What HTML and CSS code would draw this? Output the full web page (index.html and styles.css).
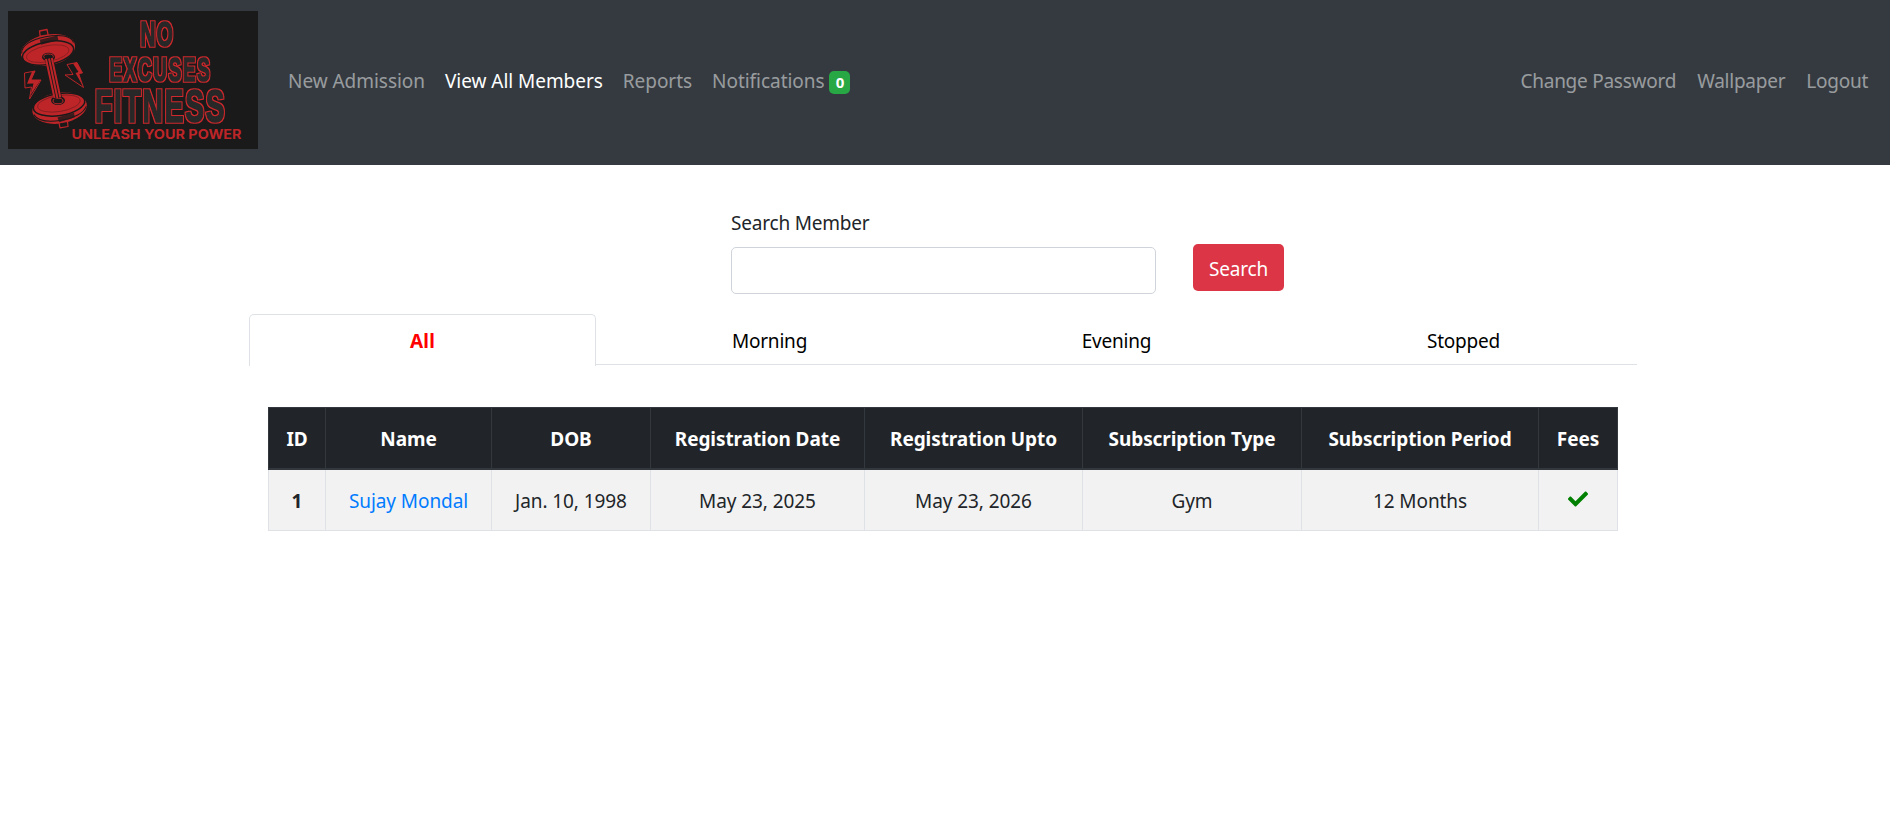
FILE: index.html
```html
<!DOCTYPE html>
<html lang="en">
<head>
<meta charset="utf-8">
<title>View All Members</title>
<link rel="stylesheet" href="styles.css">
</head>
<body>
<nav class="navbar">
  <svg class="logo" width="250" height="138" viewBox="8 11 250 138" role="img">
    <defs>
      <filter id="outline" x="-5%" y="-5%" width="110%" height="110%" color-interpolation-filters="sRGB">
        <feMorphology in="SourceAlpha" operator="dilate" radius="1" result="grown"/>
        <feFlood flood-color="#d0282c"/>
        <feComposite in2="grown" operator="in" result="edge"/>
        <feMerge><feMergeNode in="edge"/><feMergeNode in="SourceGraphic"/></feMerge>
      </filter>
    </defs>
    <rect x="8" y="11" width="250" height="138" fill="#1a1a1a"/>
    <!-- dumbbell -->
    <g stroke-linejoin="round">
      <path d="M39.500 31l7.500-1.500 1.200 6-8 1z" fill="#1a1a1a" stroke="#bd2528" stroke-width="1.300"/>
      <g transform="rotate(-11 48 50)">
        <ellipse cx="48" cy="50" rx="27.500" ry="15.500" fill="#bd2528"/>
        <path d="M21.500 48.500c1-8 12-12 26.500-12s25.500 4 26.500 11" fill="none" stroke="#1a1a1a" stroke-width="1"/>
        <path d="M42 38.500l18-1v5l-18 1z" fill="#1a1a1a" opacity=".8"/>
        <ellipse cx="47.500" cy="53" rx="26" ry="11.300" fill="none" stroke="#1a1a1a" stroke-width="1.500"/>
        <ellipse cx="47" cy="53.500" rx="21.500" ry="8" fill="none" stroke="#7a1d1f" stroke-width=".7"/>
      </g>
      <ellipse cx="48.500" cy="57" rx="6.500" ry="4.300" fill="#1a1a1a"/>
      <ellipse cx="48.500" cy="56.500" rx="4.800" ry="2.500" fill="none" stroke="#bd2528"/>
      <g transform="rotate(-9 59.500 107.500)">
        <ellipse cx="59.500" cy="108" rx="27.500" ry="15.500" fill="#bd2528"/>
        <ellipse cx="59.500" cy="104.500" rx="26" ry="11" fill="none" stroke="#1a1a1a" stroke-width="1.500"/>
        <ellipse cx="59.500" cy="103.500" rx="21.500" ry="8" fill="none" stroke="#7a1d1f" stroke-width=".8"/>
        <path d="M33 110.500c3 7 14 10 26.500 10s23.500-4 26.500-10" fill="none" stroke="#1a1a1a" stroke-width="1"/>
        <path d="M56 117l17-2v4.500l-16 2.500z" fill="#1a1a1a" opacity=".8"/>
      </g>
      <ellipse cx="58" cy="100.500" rx="7" ry="4.500" fill="#1a1a1a"/>
      <ellipse cx="58" cy="101" rx="5" ry="2.800" fill="none" stroke="#bd2528"/>
      <path d="M44.500 58l8-1.500 9.500 41-8 1.500z" fill="#1a1a1a"/>
      <path d="M46 59l8.500 39M49 58.500l8.500 40M51.800 58l8.500 39.500" stroke="#bd2528" stroke-width="2" fill="none"/>
      <path d="M59 122.800l8.500-1.300.5 5-8 1.300z" fill="#1a1a1a" stroke="#bd2528" stroke-width="1.200"/>
      <g fill="#1a1a1a" stroke="#bd2528" stroke-width="1">
        <path d="M24.500 73l10.500-2-4 9 10 0-11.500 19 2-12-6.500 1z"/>
        <path d="M67 64.500l10-2 5.500 10.500-4 .5 5 14-18.500-12.500 8-.5z"/>
      </g>
      <path d="M32 71.500l3-.8-4 9.200 9.500.2-10 15 3-11.500-6.500.2zM73 63.500l4-1 5.500 10.500-3.500.5 3.500 12-7-12.500 3-1z" fill="#bd2528"/>
    </g>
    <g class="logo-title" filter="url(#outline)">
      <text transform="translate(140.500 46) scale(.6 1)" font-size="34.500" textLength="54" lengthAdjust="spacing">NO</text>
      <text transform="translate(109.500 81) scale(.56 1)" font-size="33.500" textLength="179" lengthAdjust="spacing">EXCUSES</text>
      <text transform="translate(95 121.500) scale(.6 1)" font-size="47" textLength="216" lengthAdjust="spacing">FITNESS</text>
    </g>
    <text class="logo-tag" x="71.500" y="138.500" textLength="170" lengthAdjust="spacingAndGlyphs">UNLEASH YOUR POWER</text>
  </svg>
  <div class="nav-list">
    <a>New Admission</a>
    <a class="active">View All Members</a>
    <a>Reports</a>
    <a>Notifications <span class="badge">0</span></a>
  </div>
  <div class="nav-list nav-right">
    <a>Change Password</a>
    <a>Wallpaper</a>
    <a>Logout</a>
  </div>
</nav>
<main class="container">
  <form class="search">
    <div class="field">
      <label for="q">Search Member</label>
      <input id="q" type="text">
    </div>
    <button type="button" class="btn">Search</button>
  </form>
  <div class="tabs">
    <a class="tab selected">All</a>
    <a class="tab">Morning</a>
    <a class="tab">Evening</a>
    <a class="tab">Stopped</a>
  </div>
  <table class="members">
    <colgroup><col class="c-id"><col class="c-name"><col class="c-dob"><col class="c-reg"><col class="c-upto"><col class="c-type"><col class="c-period"><col class="c-fees"></colgroup>
    <thead>
      <tr><th>ID</th><th>Name</th><th>DOB</th><th>Registration Date</th><th>Registration Upto</th><th>Subscription Type</th><th>Subscription Period</th><th>Fees</th></tr>
    </thead>
    <tbody>
      <tr><th>1</th><td><a class="link">Sujay Mondal</a></td><td>Jan. 10, 1998</td><td>May 23, 2025</td><td>May 23, 2026</td><td>Gym</td><td>12 Months</td>
      <td><svg class="check" width="20" height="20" viewBox="0 0 512 512"><path fill="green" d="M173.900 439.400l-166.400-166.400c-10-10-10-26.200 0-36.200l36.200-36.200c10-10 26.200-10 36.200 0L192 312.700 432.100 72.600c10-10 26.200-10 36.200 0l36.200 36.200c10 10 10 26.200 0 36.200l-294.400 294.400c-10 10-26.200 10-36.200 0z"/></svg></td></tr>
    </tbody>
  </table>
</main>
</body>
</html>
```

FILE: styles.css
```css
* { box-sizing: border-box; }
body {
  margin: 0;
  background: #fff;
  color: #212529;
  font: 19px/30px "Noto Sans", "Open Sans", sans-serif;
  letter-spacing: -.2px;
}
.navbar {
  display: flex;
  align-items: center;
  height: 165px;
  padding: 0 22px 5px 8px;
  background: #343a40;
}
.logo { display: block; flex: none; }
.logo-title {
  font-family: "Liberation Sans", sans-serif;
  font-weight: 700;
  fill: #282828;
  stroke: #282828;
  stroke-width: 1.6px;
  letter-spacing: 0;
}
.logo-tag {
  font: 700 13px "Inter", sans-serif;
  fill: #bd2528;
  letter-spacing: 0;
}
.nav-list {
  display: flex;
  gap: 20px;
  margin: 1px 0 0 30px;
  color: rgba(255,255,255,.5);
  letter-spacing: -.04px;
  white-space: nowrap;
}
.nav-right { margin-left: auto; gap: 21px; letter-spacing: -.25px; }
.active { color: #fff; }
.badge {
  display: inline-block;
  min-width: 21px;
  padding: 4px 6px;
  border-radius: 5px;
  background: #28a745;
  color: #fff;
  font-size: 15px;
  font-weight: 700;
  line-height: 15px;
  text-align: center;
  letter-spacing: 0;
  vertical-align: baseline;
}
.container { width: 1388px; margin: 0 auto 0 249px; }
.search {
  display: flex;
  align-items: flex-end;
  gap: 37px;
  padding: 43px 0 0 482px;
}
.field { width: 425px; }
.field label { display: block; margin-bottom: 9px; }
.field input {
  display: block;
  width: 100%;
  height: 47px;
  border: 1px solid #ced4da;
  border-radius: 5px;
  background: #fff;
}
.btn {
  width: 91px;
  height: 47px;
  margin-bottom: 3px;
  padding: 2px 0 0;
  border: 0;
  border-radius: 5px;
  background: #dc3545;
  color: #fff;
  font: inherit;
  letter-spacing: inherit;
}
.tabs {
  display: flex;
  height: 51px;
  margin-top: 20px;
  border-bottom: 1px solid #dee2e6;
}
.tab {
  flex: 1;
  height: 52px;
  padding-top: 11px;
  border: 1px solid transparent;
  border-bottom: 0;
  color: #000;
  text-align: center;
}
.selected {
  border-color: #dee2e6;
  border-radius: 5px 5px 0 0;
  background: #fff;
  color: red;
  font-weight: 700;
  letter-spacing: .2px;
}
.members {
  width: 1350px;
  margin: 42px 0 0 19px;
  border-collapse: collapse;
  table-layout: fixed;
  text-align: center;
  letter-spacing: -.08px;
  white-space: nowrap;
}
.members th, .members td { padding: 2px 0 0; border: 1px solid #dee2e6; }
.members thead th {
  height: 61px;
  padding-top: 3px;
  border-color: #32383e;
  border-bottom-width: 2px;
  background: #212529;
  color: #fff;
}
.members tbody tr { height: 62px; background: #f2f2f2; }
.c-id { width: 57px; }
.c-name { width: 166px; }
.c-dob { width: 159px; }
.c-reg { width: 214px; }
.c-upto { width: 218px; }
.c-type { width: 219px; }
.c-period { width: 237px; }
.c-fees { width: 79px; }
.link { color: #007bff; }
.check { display: block; margin: -3px auto 0; }
```
